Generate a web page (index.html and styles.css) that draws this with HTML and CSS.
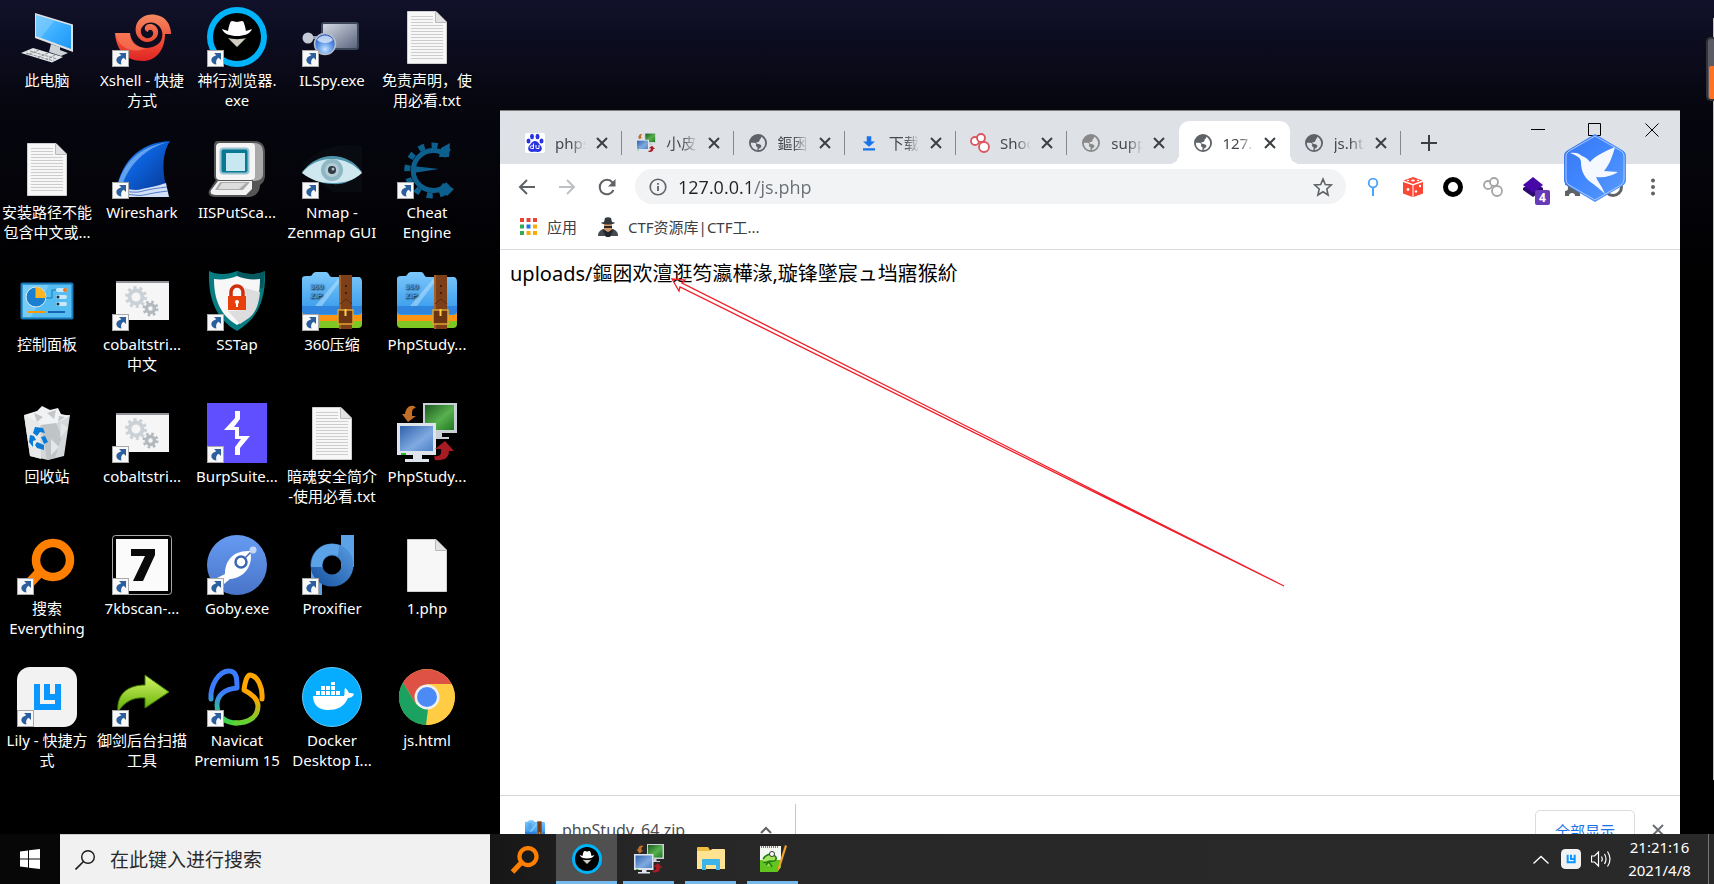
FILE: index.html
```html
<!DOCTYPE html>
<html lang="zh-CN">
<head>
<meta charset="utf-8">
<title>桌面</title>
<link rel="stylesheet" href="styles.css">
</head>
<body>
<svg class="defs" aria-hidden="true">
  <defs>
    <linearGradient id="g-screen" x1="0" y1="0" x2="1" y2="1"><stop offset="0" stop-color="#6cc6ff"/><stop offset=".55" stop-color="#38adff"/><stop offset="1" stop-color="#1d95f5"/></linearGradient>
    <linearGradient id="g-red" x1="0" y1="0" x2="0" y2="1"><stop offset="0" stop-color="#f58a62"/><stop offset=".6" stop-color="#ee4a34"/><stop offset="1" stop-color="#e02424"/></linearGradient>
    <linearGradient id="g-steel" x1="0" y1="0" x2="1" y2="1"><stop offset="0" stop-color="#d9dee8"/><stop offset="1" stop-color="#56617a"/></linearGradient>
    <radialGradient id="g-ball" cx=".5" cy=".75" r=".7"><stop offset="0" stop-color="#c5e4ff"/><stop offset=".5" stop-color="#5f97e8"/><stop offset="1" stop-color="#2b58b8"/></radialGradient>
    <linearGradient id="g-fin" x1="0" y1="0" x2="1" y2="1"><stop offset="0" stop-color="#4aa0f5"/><stop offset=".4" stop-color="#0c62dc"/><stop offset="1" stop-color="#07338c"/></linearGradient>
    <linearGradient id="g-folder" x1="0" y1="0" x2="0" y2="1"><stop offset="0" stop-color="#7cc8fb"/><stop offset="1" stop-color="#3297ea"/></linearGradient>
    <linearGradient id="g-green" x1="0" y1="0" x2="1" y2="1"><stop offset="0" stop-color="#1c5a20"/><stop offset=".55" stop-color="#58b04e"/><stop offset="1" stop-color="#1f7a22"/></linearGradient>
    <linearGradient id="g-blue" x1="0" y1="0" x2="1" y2="1"><stop offset="0" stop-color="#2f62ac"/><stop offset=".6" stop-color="#7fa9e0"/><stop offset="1" stop-color="#4f82c9"/></linearGradient>
    <linearGradient id="g-goby" x1="0" y1="0" x2="0" y2="1"><stop offset="0" stop-color="#669bf2"/><stop offset="1" stop-color="#4874c8"/></linearGradient>
    <linearGradient id="g-prox" x1="0" y1="1" x2="1" y2="0"><stop offset="0" stop-color="#1f5aa6"/><stop offset="1" stop-color="#4f93da"/></linearGradient>
    <linearGradient id="g-leaf" x1="0" y1="0" x2="0" y2="1"><stop offset="0" stop-color="#d5f56a"/><stop offset="1" stop-color="#5fae00"/></linearGradient>
    <linearGradient id="g-nav" x1="0" y1="0" x2="0" y2="1"><stop offset="0" stop-color="#3b7cff"/><stop offset=".4" stop-color="#3b7cff"/><stop offset=".8" stop-color="#2fc98a"/><stop offset="1" stop-color="#45d33c"/></linearGradient>
    <linearGradient id="g-nav2" x1="0" y1="0" x2="0" y2="1"><stop offset="0" stop-color="#ffa600"/><stop offset=".5" stop-color="#ffa600"/><stop offset="1" stop-color="#5fd335"/></linearGradient>
    <linearGradient id="g-bird" x1="0" y1="0" x2="1" y2="1"><stop offset="0" stop-color="#3a76ee"/><stop offset=".45" stop-color="#3f86ff"/><stop offset="1" stop-color="#5a9bf8"/></linearGradient>
  </defs>

  <symbol id="shortcut" viewBox="0 0 17 17"><rect x=".5" y=".5" width="16" height="16" fill="#f8f8f8" stroke="#a9a9a9"/><path d="M7 3h7v7l-2.300-2.200C9.500 9 8.600 11 9.400 14.500 5 14 4 11 4.500 9 5 7.300 7 6 9.300 5.300z" fill="#2c5f9e"/></symbol>

  <symbol id="pc" viewBox="0 0 60 60"><path d="M18 6l38 11.500V45L18 31z" fill="#dde1e4"/><path d="M19 8l35 10.500V42L19 29z" fill="url(#g-screen)"/><path d="M19 8l18 6L24 30.500 19 29z" fill="#8bd2ff" opacity=".5"/><path d="M34 37l9 3v3l8 3-7 3-12-4z" fill="#cdd2d6"/><path d="M16 41l30 9-11 5.500L4 46z" fill="#e4e7e9"/><path d="M9 46l28 8M13 44l27 8M22 43l-12 5M31 46l-11 5M38 48l-9 5" stroke="#8d9398" stroke-width="1" stroke-dasharray="3 1"/></symbol>

  <symbol id="xshell" viewBox="0 0 60 60"><path d="M3 26h15c0 6 3 12 10 14 9 3 20-1 22-9 3-11-9-20-18-13-5 4-4 11 2 13 4 1 8-2 7-6-1-3-5-3-5 0-5-1-4-8 2-8 8 0 11 10 5 15-9 8-22-1-19-13 2-8 11-13 20-11 9 1 15 9 15 19H53C53 44 43 54 31 54 12 54 4 41 3 26z" fill="url(#g-red)"/><path d="M3 26h15c1 8 7 15 16 15C20 48 6 40 3 26z" fill="#ff8c66" opacity=".5"/></symbol>

  <symbol id="spy" viewBox="0 0 60 60"><circle cx="30" cy="30" r="30" fill="#00b4fb"/><circle cx="30" cy="30" r="24" fill="#000"/><path d="M21 24c1-5 2-10 4-10 2 0 3 1 5 1s3-1 5-1c2 0 3 5 4 10l6-2c-2 5-8 7-15 7s-13-2-15-7z" fill="#fff"/><path d="M21 31c5 1.500 13 1.500 18 0l-9 9z" fill="#d3ccc0"/></symbol>

  <symbol id="ilspy" viewBox="0 0 60 60"><rect x="20" y="16" width="36" height="26" rx="2" fill="url(#g-steel)" stroke="#3c4658" stroke-width="2"/><path d="M6 29h18v3H6z" fill="#8e98aa"/><circle cx="6" cy="31" r="5.500" fill="#c4cad5"/><circle cx="23" cy="37" r="10.500" fill="url(#g-ball)" stroke="#b5bfce" stroke-width="1.500"/><path d="M15 33c3-6 13-6 16 0-4 4-12 4-16 0z" fill="#f1f7ff" opacity=".7"/></symbol>

  <symbol id="doc" viewBox="0 0 60 60"><path d="M10.500 4.500H39L49.500 15v41.500h-39z" fill="#f7f7f7" stroke="#cfcfcf"/><path d="M38.500 4.500v11h11" fill="#e2e2e2" stroke="#b9b9b9"/></symbol>
  <symbol id="txt" viewBox="0 0 60 60"><use href="#doc"/><path d="M14 9.500h22M14 12.500h22M14 15.500h22M14 18.500h32M14 21.500h32M14 24.500h32M14 27.500h32M14 30.500h32M14 33.500h32M14 36.500h32M14 39.500h32M14 42.500h32M14 45.500h32M14 48.500h32M14 51.500h32" stroke="#cdcdcd"/></symbol>

  <symbol id="shark" viewBox="0 0 60 60"><path d="M4 57C6 26 26 3 58 2c-9 14-8 34-1 56z" fill="url(#g-fin)"/><path d="M5 49C10 25 28 7 56 3 34 9 16 25 9 50z" fill="#9ac8f8" opacity=".6"/><path d="M4 52c10-5 16 1 26-2 9-2 15-3 24-6l3 14H4z" fill="#d3e0f8"/><path d="M5 53c9-2 17 2 26-1 8-2 15-3 24-4M6 57c10-4 18 1 26-1 9-2 15-3 24-4" stroke="#3463b8" fill="none" stroke-width=".8"/></symbol>

  <symbol id="oldpc" viewBox="0 0 60 60"><path d="M10 2h38c7 0 10 5 10 11v23c0 5-2 8-5 10 0 7-5 12-11 12H8c-6 0-8-4-5-8l6-9c-2-1-2-3-2-6V7c0-3 1-5 3-5z" fill="#555"/><path d="M43 4h6c5 1 7 4 7 10v21c0 5-4 7-10 7z" fill="#aaa"/><rect x="9" y="4" width="39" height="37" rx="4" fill="#f5f5f5"/><rect x="13.500" y="9.500" width="28" height="25" rx="3" fill="#087995" stroke="#99c4cf" stroke-width="2"/><rect x="19" y="14" width="19" height="18" fill="#c7e8f0"/><path d="M11 42h34v8l-6 6H9c-5 0-7-3-4-6z" fill="#f2f2f2"/><path d="M13 43h30l-7 8H8z" fill="#ababab"/><path d="M15 44h24l-7 6H11z" fill="#ddd"/></symbol>

  <symbol id="eye" viewBox="0 0 60 60"><path d="M0 26C18 6 42 4 60 7v46H30z" fill="#080b0f"/><path d="M0 33C9 22 19 17 30 17c12 0 22 5 30 16-9 9-19 13-30 12-12 0-21-5-30-12z" fill="#4f94ad"/><path d="M0 34C8 24 19 20 30 20c12 0 22 5 30 14-9 8-18 10-30 10S9 41 0 34z" fill="#cfe7ef"/><circle cx="30" cy="31" r="11" fill="#8fb7c4"/><circle cx="30" cy="31" r="7" fill="#b4cdd6"/><circle cx="30" cy="31" r="4" fill="#2e3a42"/><circle cx="31" cy="30" r="1.500" fill="#a9bfc9"/></symbol>

  <symbol id="cheat" viewBox="0 0 60 60"><path d="M50 17A20 20 0 1 0 51 45" fill="none" stroke="#0d5f8d" stroke-width="5"/><path d="M52 13A25 25 0 1 0 54 48" fill="none" stroke="#0d5f8d" stroke-width="6" stroke-dasharray="6 7"/><path d="M44 9l9-5-1 14-10 0zM46 44l11 6-7 7-8-7zM16 27l26 3-26 4z" fill="#0d5f8d"/></symbol>

  <symbol id="control" viewBox="0 0 60 60"><rect x="4.500" y="12.500" width="51" height="35" rx="1" fill="#55bdf2" stroke="#1779ba" stroke-width="2"/><path d="M6 14h26L14 46H6z" fill="#a0ddfb" opacity=".45"/><circle cx="19" cy="26" r="10" fill="#1a7fce" stroke="#d7effb"/><path d="M18.500 27V16a10 10 0 0 1 10 11z" fill="#ffb522"/><path d="M29 27h6v-8h4" fill="none" stroke="#1779ba"/><rect x="39" y="17" width="11" height="4" rx="2" fill="#c9e9fa"/><rect x="39" y="24" width="11" height="4" rx="2" fill="#c9e9fa"/><rect x="39" y="31" width="11" height="4" rx="2" fill="#c9e9fa"/><circle cx="48" cy="19" r="2" fill="#f4761c"/><circle cx="41" cy="26" r="1.500" fill="#17324a"/><circle cx="41" cy="33" r="1.500" fill="#17324a"/><path d="M11 41h18" stroke="#f90" stroke-width="2"/><path d="M31 41h17" stroke="#1567b1" stroke-width="2"/></symbol>

  <symbol id="gears" viewBox="0 0 60 60"><path d="M4 10h53v39H4z" fill="#f6f6f6"/><path d="M4 10h53v2H4z" fill="#909498"/><circle cx="24" cy="26" r="6.500" fill="none" stroke="#cbd2d7" stroke-width="4"/><circle cx="24" cy="26" r="9.500" fill="none" stroke="#cbd2d7" stroke-width="3" stroke-dasharray="3 3"/><circle cx="38.500" cy="37.500" r="4" fill="none" stroke="#b3babf" stroke-width="3.500"/><circle cx="38.500" cy="37.500" r="6.500" fill="none" stroke="#b3babf" stroke-width="3" stroke-dasharray="2.500 2.600"/></symbol>

  <symbol id="shield" viewBox="0 0 60 60"><path d="M2 0l5 2c8 2 16 1 23-2 7 3 15 4 23 2l5-2c1 28-7 48-28 60C9 48 1 28 2 0z" fill="#067b80"/><path d="M30 0c7 3 15 4 23 2l5-2-2 18-26-12z" fill="#06595f"/><path d="M7 8c8 1 16 0 23-3 7 3 15 4 23 3 0 20-6 36-23 46C13 44 7 28 7 8z" fill="#f7f7f7"/><path d="M39 39l-1-22 15 4c-1 12-4 20-11 26L33 53 21 40z" fill="#ddd"/><rect x="21" y="25" width="18" height="14" fill="#e8400c"/><path d="M24 25v-4a6 6 0 0 1 12 0v4" fill="none" stroke="#cf2f0c" stroke-width="3.500"/><circle cx="30" cy="31" r="2" fill="#fff"/><path d="M29 31h2v5h-2z" fill="#fff"/></symbol>

  <symbol id="zip" viewBox="0 0 60 60"><path d="M0 44h60v9a4 4 0 0 1-4 4H4a4 4 0 0 1-4-4z" fill="#7fc725"/><path d="M0 38h60v12H0z" fill="#fd9412"/><path d="M0 8c0-2 1-3 4-3h4c3 0 2-4 6-4h10c3 0 3 5 6 5h26c3 0 4 2 4 5v30c0 2-2 3-4 3H4c-2 0-4-1-4-3z" fill="url(#g-folder)"/><path d="M0 35h60v5c0 2-2 3-4 3H4c-2 0-4-1-4-3z" fill="#2f85dd"/><path d="M13 35L36 8h4L20 35z" fill="#b7e0fd" opacity=".55"/><text class="zip-mark" x="8" y="18">360</text><text class="zip-mark" x="8" y="27">ZIP</text><path d="M37 4h13v54H37z" fill="#7d3f17"/><path d="M37 4h2v54h-2z" fill="#a4602b"/><circle cx="44" cy="15" r="1" fill="#2d1404"/><circle cx="44" cy="22" r="1" fill="#2d1404"/><path d="M38 33l6-5 6 5" fill="none" stroke="#5b2a0c"/><rect x="36" y="39" width="15" height="14" fill="#6b3412" stroke="#e0a432" stroke-width="1.500"/><path d="M43.500 38v7" stroke="#ffce4a" stroke-width="2"/></symbol>

  <symbol id="bin" viewBox="0 0 60 60"><path d="M7 12l46 0-6 41-16 4-18-4z" fill="#d5d8da"/><path d="M7 12l13-4 5-5 8 4 8-2 3 6 9 2-15 8-15 1z" fill="#f1f2f3"/><path d="M17 10l9 4-6 5zM30 10l9-3-2 9zM42 13l6 1-7 5z" fill="#c3c7ca"/><path d="M7 12l16 8 1 36-11-3z" fill="#e7e9ea"/><path d="M24 22l15-2 6 13-7 22-8 2z" fill="#bfc4c7"/><path d="M44 20l7 5-8 10zM34 36l8 8-8 8z" fill="#e4e7e8"/><path d="M18 24l8 1 2 5-5-1-3 4-4-3zM13 32l4 1 2 4-3 1 0 6-4-5zM20 39l7 3v5l-7-2-2-3zM24 34l4-1 3 6-4 2z" fill="#0a7bd6"/></symbol>

  <symbol id="burp" viewBox="0 0 60 60"><path d="M0 0h60v60H0z" fill="#604fff"/><path d="M28 8v7L17 27h11v9h6l-6 8v8h5v-7l10-12H32v-9h-5l6-8V8z" fill="#fff"/></symbol>

  <symbol id="study" viewBox="0 0 60 60"><path d="M26 0h34v30H45v4h7v2H33v-4h6v-3H26z" fill="#c9d0d8"/><path d="M28 2h29v25H28z" fill="url(#g-green)"/><path d="M17 3C12 2 9 5 8 11H5l6 8 8-6h-4c0-5 0-8 4-8z" fill="#c26f27"/><path d="M0 20h39v32H25v4h7v3H8v-3h8v-4H0z" fill="#dfe4ec"/><path d="M3 23h33v25H3z" fill="url(#g-blue)"/><path d="M4 51h5" stroke="#27b827" stroke-width="2"/><path d="M38 57c9 1 14-2 14-9h5l-9-10-10 8h6c1 5-1 8-7 7z" fill="#a61b24"/></symbol>

  <symbol id="search-o" viewBox="0 0 60 60"><path d="M22 38L5 56" stroke="#ff8000" stroke-width="10"/><circle cx="36" cy="25" r="17" fill="none" stroke="#ff8000" stroke-width="8.500"/></symbol>

  <symbol id="seven" viewBox="0 0 60 60"><path d="M0 0h60v60H0z" fill="#000"/><rect x=".5" y=".5" width="59" height="59" rx="3" fill="none" stroke="#aaa"/><rect x="4" y="4" width="52" height="52" fill="#fbfbfb"/><path d="M19 14h24v6L31 46h-10l12-25H19z" fill="#0a0a0a"/></symbol>

  <symbol id="goby" viewBox="0 0 60 60"><circle cx="30" cy="30" r="30" fill="url(#g-goby)"/><path d="M10 43l8-4c0-12 7-24 25-23 4 13-5 27-20 28l-6 5z" fill="#fff"/><circle cx="34" cy="27" r="5.500" fill="#fff" stroke="#3a66b4" stroke-width="2.500"/><path d="M38 23l7-7" stroke="#3a66b4" stroke-width="1.500"/><circle cx="46" cy="15" r="3.500" fill="#c3d6f7"/></symbol>

  <symbol id="prox" viewBox="0 0 60 60"><path d="M39 0h13v32H39z" fill="#5ba2e6"/><path d="M9 28h11v32H9z" fill="#5ba2e6"/><circle cx="30" cy="30" r="15.500" fill="none" stroke="url(#g-prox)" stroke-width="12"/><path d="M9 32C9 14 24 6 37 10l-1 11c-8-4-16 1-16 11z" fill="#5ba2e6"/></symbol>

  <symbol id="lily" viewBox="0 0 60 60"><rect width="60" height="60" rx="13" fill="#f2f2f2"/><path d="M17 17h6v20h15v-4H27V17h6v10h5V17h6v26H17z" fill="#0a97ff"/></symbol>

  <symbol id="share" viewBox="0 0 60 60"><path d="M6 45C4 27 16 18 33 18V8l24 17-24 16V31c-12-1-21 4-27 14z" fill="url(#g-leaf)" stroke="#3d7a00"/></symbol>

  <symbol id="navicat" viewBox="0 0 60 60"><path d="M4 32C3 18 12 4 22 4c8 0 8 8 8 17-12 1-20 7-20 17 0 12 9 18 20 18" fill="none" stroke="url(#g-nav)" stroke-width="5" stroke-linecap="round" stroke-linejoin="round"/><path d="M28 56c14 0 23-6 23-17 0-7-6-12-14-16 1-8 3-15 6-15 8 1 13 13 12 24" fill="none" stroke="url(#g-nav2)" stroke-width="5" stroke-linecap="round" stroke-linejoin="round"/></symbol>

  <symbol id="docker" viewBox="0 0 60 60"><circle cx="30" cy="30" r="29.500" fill="#06adff" stroke="#63c8fa"/><path d="M11 29h31c1-2 0-5 1-8 2 1 3 3 4 5 2 0 4 0 5 1-1 3-4 4-6 4-4 9-11 12-20 12-11 0-15-7-15-14z" fill="#fff"/><path d="M14 24h4v4h-4zM19 24h4v4h-4zM24 24h4v4h-4zM29 24h4v4h-4zM34 24h4v4h-4zM19 19h4v4h-4zM24 19h4v4h-4zM29 19h4v4h-4zM29 15h4v3h-4z" fill="#fff"/></symbol>

  <symbol id="chrome" viewBox="0 0 60 60"><circle cx="30" cy="30" r="28" fill="#fc4"/><path d="M6 15.500A28 28 0 0 1 54.500 17H30L19 37z" fill="#de5246"/><path d="M6 15.500L19 37l12 5-2 16A28 28 0 0 1 6 15.500z" fill="#1ba261"/><path d="M30 58l12-21 1-20H54.500A28 28 0 0 1 30 58z" fill="#fc4"/><circle cx="30" cy="30" r="12.500" fill="#f1f1f1"/><circle cx="30" cy="30" r="10" fill="#4c8bf5"/></symbol>

  <symbol id="paw" viewBox="0 0 20 20"><rect width="20" height="20" rx="2" fill="#fff"/><ellipse cx="7" cy="3.500" rx="2" ry="2.700" fill="#2832e1"/><ellipse cx="12.500" cy="3.500" rx="2" ry="2.700" fill="#2832e1"/><ellipse cx="3.500" cy="8" rx="2" ry="2.600" fill="#2832e1"/><ellipse cx="16.500" cy="8" rx="2" ry="2.600" fill="#2832e1"/><path d="M10 8c3 0 4 3 6 5 2 3 0 6-3 6-2 0-4-.5-6 0-3 0-5-3-3-6 2-2 3-5 6-5z" fill="#2832e1"/><path d="M8.500 10.500v5H6.500a1.200 1.200 0 0 1 0-2.600h2M11 12v2.500q0 1 1 1h2V12" fill="none" stroke="#fff"/></symbol>
  <symbol id="globe" viewBox="0 0 24 24"><path fill="currentColor" d="M12 0a12 12 0 1 0 0 24 12 12 0 0 0 0-24zM2.500 11.500c3 .5 6-.5 7 1.500.5 2-1.500 3 1 4 1.500.5 1 2.500.5 4.500C6 21 2.200 16.500 2.500 11.500zM13 21.500c-.5-3 3.500-2.500 3.500-5.500 0-2.500-5-2-7-4 0-2 4-.5 4.500-3.500S17 6 16 3.500c3.500 1.500 5.500 5 5.500 8.500 0 5-3.500 9-8.500 9.500z"/></symbol>
  <symbol id="down" viewBox="0 0 24 24"><path d="M9 3h6v7h5l-8 7-8-7h5zM4 19h16v3H4z" fill="#1a73e8"/></symbol>
  <symbol id="rings" viewBox="0 0 20 20"><g fill="#fff" stroke="currentColor" stroke-width="1.800"><circle cx="5" cy="8" r="4"/><circle cx="11" cy="5" r="4"/><circle cx="14" cy="14" r="5"/></g></symbol>
  <symbol id="x" viewBox="0 0 12 12"><path d="M1 1l10 10M11 1L1 11" stroke="currentColor" stroke-width="2"/></symbol>
  <symbol id="bird" viewBox="0 0 64 70"><path d="M32 1l27 16q4 2 4 6v24q0 4-4 6L32 69 5 53q-4-2-4-6V23q0-4 4-6z" fill="url(#g-bird)"/><path d="M32 3l26 15q3 2 3 5v23q0 4-3 6L32 67 6 52q-3-2-3-6V23q0-3 3-5z" fill="none" stroke="#a9c9ff"/><path d="M7 20c5-1 9 0 12 3 3 1 6 3 8 6 6-7 16-11 25-15-3 11-6 18-11 24l14 1c-6 4-14 6-22 5 2 5 6 9 9 17-7-7-12-10-17-14-6-6-7-13-7-18 0-5-6-7-11-9z" fill="#f5f8ff"/></symbol>
</svg>

<main class="desktop">
  <nav class="icons" aria-label="桌面图标">
    <button class="icon"><svg class="art"><use href="#pc"/></svg><span>此电脑</span></button>
    <button class="icon"><svg class="art"><use href="#txt"/></svg><span>安装路径不能<br>包含中文或...</span></button>
    <button class="icon"><svg class="art"><use href="#control"/></svg><span>控制面板</span></button>
    <button class="icon"><svg class="art"><use href="#bin"/></svg><span>回收站</span></button>
    <button class="icon"><svg class="art"><use href="#search-o"/><use href="#shortcut" y="43" width="17" height="17"/></svg><span>搜索<br>Everything</span></button>
    <button class="icon"><svg class="art"><use href="#lily"/><use href="#shortcut" y="43" width="17" height="17"/></svg><span>Lily - 快捷方<br>式</span></button>

    <button class="icon"><svg class="art"><use href="#xshell"/><use href="#shortcut" y="43" width="17" height="17"/></svg><span>Xshell - 快捷<br>方式</span></button>
    <button class="icon"><svg class="art"><use href="#shark"/><use href="#shortcut" y="43" width="17" height="17"/></svg><span>Wireshark</span></button>
    <button class="icon"><svg class="art"><use href="#gears"/><use href="#shortcut" y="43" width="17" height="17"/></svg><span>cobaltstri...<br>中文</span></button>
    <button class="icon"><svg class="art"><use href="#gears"/><use href="#shortcut" y="43" width="17" height="17"/></svg><span>cobaltstri...</span></button>
    <button class="icon"><svg class="art"><use href="#seven"/><use href="#shortcut" y="43" width="17" height="17"/></svg><span>7kbscan-...</span></button>
    <button class="icon"><svg class="art"><use href="#share"/><use href="#shortcut" y="43" width="17" height="17"/></svg><span>御剑后台扫描<br>工具</span></button>

    <button class="icon"><svg class="art"><use href="#spy"/><use href="#shortcut" y="43" width="17" height="17"/></svg><span>神行浏览器.<br>exe</span></button>
    <button class="icon"><svg class="art"><use href="#oldpc"/></svg><span>IISPutSca...</span></button>
    <button class="icon"><svg class="art"><use href="#shield"/><use href="#shortcut" y="43" width="17" height="17"/></svg><span>SSTap</span></button>
    <button class="icon"><svg class="art"><use href="#burp"/><use href="#shortcut" y="43" width="17" height="17"/></svg><span>BurpSuite...</span></button>
    <button class="icon"><svg class="art"><use href="#goby"/><use href="#shortcut" y="43" width="17" height="17"/></svg><span>Goby.exe</span></button>
    <button class="icon"><svg class="art"><use href="#navicat"/><use href="#shortcut" y="43" width="17" height="17"/></svg><span>Navicat<br>Premium 15</span></button>

    <button class="icon"><svg class="art"><use href="#ilspy"/><use href="#shortcut" y="43" width="17" height="17"/></svg><span>ILSpy.exe</span></button>
    <button class="icon"><svg class="art"><use href="#eye"/><use href="#shortcut" y="43" width="17" height="17"/></svg><span>Nmap -<br>Zenmap GUI</span></button>
    <button class="icon"><svg class="art"><use href="#zip"/><use href="#shortcut" y="43" width="17" height="17"/></svg><span>360压缩</span></button>
    <button class="icon"><svg class="art"><use href="#txt"/></svg><span>暗魂安全简介<br>-使用必看.txt</span></button>
    <button class="icon"><svg class="art"><use href="#prox"/><use href="#shortcut" y="43" width="17" height="17"/></svg><span>Proxifier</span></button>
    <button class="icon"><svg class="art"><use href="#docker"/></svg><span>Docker<br>Desktop I...</span></button>

    <button class="icon"><svg class="art"><use href="#txt"/></svg><span>免责声明，使<br>用必看.txt</span></button>
    <button class="icon"><svg class="art"><use href="#cheat"/><use href="#shortcut" y="43" width="17" height="17"/></svg><span>Cheat<br>Engine</span></button>
    <button class="icon"><svg class="art"><use href="#zip"/></svg><span>PhpStudy...</span></button>
    <button class="icon"><svg class="art"><use href="#study"/></svg><span>PhpStudy...</span></button>
    <button class="icon"><svg class="art"><use href="#doc"/></svg><span>1.php</span></button>
    <button class="icon"><svg class="art"><use href="#chrome"/></svg><span>js.html</span></button>
  </nav>

  <section class="window" aria-label="浏览器">
    <header class="titlebar">
      <div class="tabs">
        <div class="tab"><svg class="fav"><use href="#paw"/></svg><span class="tab-title">phps</span><button class="tab-close" aria-label="关闭"><svg><use href="#x"/></svg></button></div>
        <div class="tab"><svg class="fav"><use href="#study"/></svg><span class="tab-title">小皮面</span><button class="tab-close" aria-label="关闭"><svg><use href="#x"/></svg></button></div>
        <div class="tab"><svg class="fav small"><use href="#globe"/></svg><span class="tab-title">鏂囦欢</span><button class="tab-close" aria-label="关闭"><svg><use href="#x"/></svg></button></div>
        <div class="tab"><svg class="fav small"><use href="#down"/></svg><span class="tab-title">下载</span><button class="tab-close" aria-label="关闭"><svg><use href="#x"/></svg></button></div>
        <div class="tab"><svg class="fav red"><use href="#rings"/></svg><span class="tab-title">Shod</span><button class="tab-close" aria-label="关闭"><svg><use href="#x"/></svg></button></div>
        <div class="tab"><svg class="fav small light"><use href="#globe"/></svg><span class="tab-title">supp</span><button class="tab-close" aria-label="关闭"><svg><use href="#x"/></svg></button></div>
        <div class="tab active"><svg class="fav small"><use href="#globe"/></svg><span class="tab-title">127.0</span><button class="tab-close" aria-label="关闭"><svg><use href="#x"/></svg></button></div>
        <div class="tab"><svg class="fav small"><use href="#globe"/></svg><span class="tab-title">js.htm</span><button class="tab-close" aria-label="关闭"><svg><use href="#x"/></svg></button></div>
      </div>
      <button class="new-tab" aria-label="新标签页"><svg viewBox="0 0 16 16"><path d="M8 0v16M0 8h16" stroke="#3c4043" stroke-width="2"/></svg></button>
      <div class="controls">
        <button aria-label="最小化"><svg viewBox="0 0 14 14"><path d="M0 6.500h14" stroke="#000"/></svg></button>
        <button aria-label="最大化"><svg viewBox="0 0 14 14"><path d="M.5.5h12v12H.5z" fill="none" stroke="#000"/></svg></button>
        <button aria-label="关闭窗口"><svg viewBox="0 0 14 14"><path d="M.5.5l13 13M13.500.5l-13 13" stroke="#000"/></svg></button>
      </div>
    </header>

    <div class="toolbar">
      <button class="tool" aria-label="后退"><svg viewBox="0 0 18 18"><path d="M17 9H2M9 2L2 9l7 7" fill="none" stroke="#5f6368" stroke-width="2"/></svg></button>
      <button class="tool" aria-label="前进"><svg viewBox="0 0 18 18"><path d="M1 9h15M9 2l7 7-7 7" fill="none" stroke="#bdc1c6" stroke-width="2"/></svg></button>
      <button class="tool" aria-label="重新加载"><svg viewBox="0 0 18 18"><path d="M15.500 12A7.200 7.200 0 1 1 14.500 4.500" fill="none" stroke="#5f6368" stroke-width="2"/><path d="M17.500 1v7.500H10z" fill="#5f6368"/></svg></button>
      <label class="omnibox">
        <svg class="info" viewBox="0 0 18 18"><circle cx="9" cy="9" r="7.800" fill="none" stroke="#5f6368" stroke-width="1.600"/><path d="M9 8v5M9 5v1.800" stroke="#5f6368" stroke-width="1.800"/></svg>
        <input class="url" type="text" value="127.0.0.1/js.php" aria-label="地址">
        <svg class="star" viewBox="0 0 20 20"><path d="M10 2l2.300 5.500 6 .5-4.500 4 1.300 6-5.100-3.200L4.900 18l1.300-6L1.700 8l6-.5z" fill="none" stroke="#5f6368" stroke-width="1.600"/></svg>
      </label>
      <div class="extensions">
        <button class="ext" aria-label="定位"><svg viewBox="0 0 20 20"><circle cx="10" cy="6" r="4.300" fill="none" stroke="#4ba3fb" stroke-width="1.800"/><path d="M10 10v9" stroke="#4ba3fb" stroke-width="2"/></svg></button>
        <button class="ext" aria-label="骰子"><svg viewBox="0 0 20 20"><path d="M10 0l9.500 3.500L10 7 .5 3.500zM0 5l9.500 3.200V20L0 16.500zM20 5l-9.500 3.200V20l9.500-3.500z" fill="#fb4734"/><g fill="#fff"><ellipse cx="10" cy="3.500" rx="2" ry=".9"/><circle cx="5" cy="12.500" r="1.400"/><circle cx="13" cy="14.500" r="1.200"/><circle cx="17" cy="9" r="1.200"/><ellipse cx="5" cy="3.500" rx="1.300" ry=".7"/><ellipse cx="15" cy="3.500" rx="1.300" ry=".7"/></g></svg></button>
        <button class="ext" aria-label="圆环"><svg viewBox="0 0 20 20"><circle cx="10" cy="10" r="7.500" fill="#fff" stroke="#000" stroke-width="5"/></svg></button>
        <button class="ext grey" aria-label="Shodan"><svg><use href="#rings"/></svg></button>
        <button class="ext" aria-label="图层"><svg viewBox="0 0 20 20"><path d="M0 11l10-6 10 6v2l-10 7-10-7z" fill="#2b0a70"/><path d="M10 0l10 8-10 8L0 8z" fill="#4609a8"/></svg><span class="badge">4</span></button>
        <button class="ext" aria-label="扩展程序"><svg viewBox="0 0 20 20"><path d="M3 4h4a3 3 0 0 1 6 0h4v5a3 3 0 0 1 0 6v4h-5a3 3 0 0 0-6 0H2v-5a3 3 0 0 0 0-6z" fill="#5f6368"/></svg></button>
        <button class="ext" aria-label="用户"><svg viewBox="0 0 20 20"><circle cx="10" cy="10" r="8.500" fill="none" stroke="#5f6368" stroke-width="3"/></svg></button>
        <button class="ext" aria-label="菜单"><svg viewBox="0 0 20 20"><g fill="#5f6368"><circle cx="10" cy="3.500" r="2"/><circle cx="10" cy="10" r="2"/><circle cx="10" cy="16.500" r="2"/></g></svg></button>
      </div>
      <svg class="bird"><use href="#bird"/></svg>
    </div>

    <nav class="bookmarks">
      <a href="#apps"><svg viewBox="0 0 17 17"><path d="M0 0h4v4H0zM6.500 0h4v4h-4zM13 0h4v4h-4z" fill="#ea4335"/><path d="M0 6.500h4v4H0z" fill="#34a853"/><path d="M6.500 6.500h4v4h-4z" fill="#1a73e8"/><path d="M13 6.500h4v4h-4zM6.500 13h4v4h-4zM13 13h4v4h-4z" fill="#fbaa05"/><path d="M0 13h4v4H0z" fill="#34a853"/></svg>应用</a>
      <a href="#ctf"><svg class="detective" viewBox="0 0 20 20"><path d="M0 19c0-4 2-6 6-7h8c4 1 6 3 6 7z" fill="#444a50"/><path d="M6 7h8v5l-4 4-4-4z" fill="#d59a66"/><path d="M6 9h8v2H6zM4 12l6 3 6-3-4 8H8z" fill="#23272b"/><path d="M6 5l1-4c2-1 4-1 6 0l1 4c2 0 3 1 3 1-4 2-10 2-14 0 0 0 1-1 3-1z" fill="#33383c"/></svg>CTF资源库|CTF工...</a>
    </nav>

    <article class="page">uploads/鏂囦欢澶逛笉瀛樺湪,璇锋墜宸ュ垱寤猴紒</article>

    <footer class="downloads">
      <button class="file"><svg class="fav"><use href="#zip"/></svg><span>phpStudy_64.zip</span><svg class="chev" viewBox="0 0 12 8"><path d="M1 7l5-5 5 5" fill="none" stroke="#5f6368" stroke-width="2"/></svg></button>
      <button class="show-all">全部显示</button>
      <button class="bar-close" aria-label="关闭下载栏"><svg><use href="#x"/></svg></button>
    </footer>
  </section>

  <svg class="arrow" viewBox="0 0 614 310" aria-hidden="true"><path d="M1 1l13 1-3 3 602 303L9 9l-1 4z" fill="none" stroke="#f0202a" stroke-width="1.300"/></svg>
  <div class="edge"></div>
  <div class="meter"><span></span></div>
</main>

<footer class="taskbar">
  <button class="start" aria-label="开始"><svg viewBox="0 0 20 20"><path d="M0 2.500l8-1V9.500H0zM9 1.300L20 0v9.500H9zM0 10.500h8v8l-8-1zM9 10.500h11V20L9 18.700z" fill="#fff"/></svg></button>
  <label class="search">
    <svg viewBox="0 0 20 20"><circle cx="13" cy="7" r="6.300" fill="none" stroke="#1b1b1b" stroke-width="1.400"/><path d="M8.500 11.500L.5 19.500" stroke="#1b1b1b" stroke-width="1.600"/></svg>
    <input type="text" placeholder="在此键入进行搜索" aria-label="搜索">
  </label>
  <div class="apps">
    <button class="app" aria-label="Everything"><svg><use href="#search-o"/></svg></button>
    <button class="app running current" aria-label="神行浏览器"><svg><use href="#spy"/></svg></button>
    <button class="app running" aria-label="phpStudy"><svg><use href="#study"/></svg></button>
    <button class="app running" aria-label="文件资源管理器"><svg viewBox="0 0 30 30"><path d="M1 4q0-1 1-1h10l2 3h14q1 0 1 1v4H1z" fill="#efbd3f"/><path d="M1 7h13l2-2h12q1 0 1 1v19H1z" fill="#ffe392"/><path d="M6 26V16q0-1 1-1h16q1 0 1 1v10h-4v-5H10v5z" fill="#3cb4ea"/></svg></button>
    <button class="app running" aria-label="Notepad++"><svg viewBox="0 0 30 30"><path d="M2 2h21v21l-4 5H2z" fill="#f4f7f0"/><path d="M2 16h21v7l-4 5H2z" fill="#62c51f"/><path d="M3 3h18" stroke="#777" stroke-width="2" stroke-dasharray="1 1"/><path d="M5 15c3-5 8-6 12-3 3 3 0 6-4 5-4 0-5 3-8 1M8 21l3-3 3 5" fill="#a3e45c" stroke="#247b12" stroke-width="1.500"/><circle cx="14" cy="10" r="2.500" fill="#fff" stroke="#333"/><path d="M27 1l2 1-7 22-2 3V23z" fill="#f0a32a"/></svg></button>
  </div>
  <div class="tray">
    <button aria-label="显示隐藏的图标"><svg class="up" viewBox="0 0 16 9"><path d="M.5 8.500l7.500-7 7.500 7" fill="none" stroke="#fff" stroke-width="1.300"/></svg></button>
    <button aria-label="Lily"><svg class="mini"><use href="#lily"/></svg></button>
    <button aria-label="音量"><svg class="mini" viewBox="0 0 20 20"><path d="M.5 7h3l4-4v14l-4-4h-3z M10.500 7.500q1.500 2.500 0 5M13.500 5q3 5 0 10M16.500 2.500q5 7.500 0 15" fill="none" stroke="#fff" stroke-width="1.200"/></svg></button>
    <time class="clock" datetime="2021-04-08T21:21:16">21:21:16<br>2021/4/8</time>
    <button class="peek" aria-label="显示桌面"></button>
  </div>
</footer>
</body>
</html>
```
FILE: styles.css
```css
* { box-sizing: border-box; }

body {
  margin: 0;
  height: 100vh;
  display: flex;
  flex-direction: column;
  overflow: hidden;
  background: #000;
  font-family: "Noto Sans", "Noto Sans CJK SC", sans-serif;
  font-size: 15px;
}

button {
  margin: 0;
  padding: 0;
  border: 0;
  background: none;
  color: inherit;
  font: inherit;
}

input {
  min-width: 0;
  padding: 0;
  border: 0;
  outline: 0;
  background: none;
  font: inherit;
}

svg { display: block; flex: none; }

.defs { position: absolute; width: 0; height: 0; }

/* Desktop */

.desktop {
  position: relative;
  flex: 1;
  min-height: 0;
  overflow: hidden;
  background: linear-gradient(#11112a, #06060f 110px, #000 300px);
}

.icons {
  display: grid;
  grid-template-rows: repeat(6, 132px);
  grid-auto-flow: column;
  grid-auto-columns: 95px;
  justify-content: start;
  padding-top: 7px;
}

.icon {
  display: flex;
  flex-direction: column;
  align-items: center;
  gap: 3px;
  padding-right: 1px;
  color: #fff;
  line-height: 20px;
  white-space: nowrap;
  text-shadow: 1px 1px 2px #000;
}

.art { width: 60px; height: 60px; }

.zip-mark {
  font: bold 8px "Liberation Sans", sans-serif;
  fill: #4b9be0;
}

/* Browser window */

.window {
  position: absolute;
  top: 110px;
  right: 34px;
  bottom: -30px;
  left: 500px;
  display: flex;
  flex-direction: column;
  border-top: 1px solid #7d7d80;
  background: #fff;
}

.titlebar {
  display: flex;
  align-items: flex-start;
  height: 53px;
  padding-left: 11px;
  background: #dee1e6;
}

.tabs {
  display: flex;
  flex: 0 1 890px;
  min-width: 0;
  height: 53px;
  padding-top: 10px;
}

.tab {
  position: relative;
  display: flex;
  flex: 1 1 0;
  align-items: center;
  min-width: 0;
  padding-left: 14px;
  color: #5f6368;
}

.tab::after {
  content: "";
  position: absolute;
  right: 0;
  top: 10px;
  width: 1px;
  height: 24px;
  background: #85888d;
}

.tab.active { border-radius: 10px 10px 0 0; background: #fff; }

.tab.active::before,
.tab.active::after {
  top: auto;
  bottom: 0;
  width: 10px;
  height: 10px;
  background: radial-gradient(circle at 0 0, transparent 10px, #fff 10px);
}

.tab.active::before {
  content: "";
  position: absolute;
  left: -10px;
}

.tab.active::after {
  right: -10px;
  background: radial-gradient(circle at 100% 0, transparent 10px, #fff 10px);
}

.tab:has(+ .active)::after { display: none; }

.fav { width: 20px; height: 20px; }
.fav.small { width: 18px; height: 18px; margin: 0 1px; }
.fav.light { color: #888; }
.fav.red { color: #dc5560; }

.tab-title {
  flex: 1 1 0;
  min-width: 0;
  margin-left: 10px;
  overflow: hidden;
  color: #45484c;
  white-space: nowrap;
  mask-image: linear-gradient(to right, #000 50%, transparent);
}

.tab-close { margin: 0 14px 0 10px; color: #3c4043; }
.tab-close svg { width: 12px; height: 12px; }

.new-tab { margin: 24px 0 0 20px; }
.new-tab svg { width: 16px; height: 16px; }

.controls {
  display: flex;
  margin-left: auto;
}

.controls button {
  display: grid;
  place-items: center;
  width: 57px;
  height: 38px;
}

.controls svg { width: 14px; height: 14px; }

.toolbar {
  position: relative;
  display: flex;
  align-items: center;
  height: 45px;
  padding: 0 7px;
}

.tool {
  display: grid;
  place-items: center;
  width: 40px;
  height: 40px;
}

.tool svg { width: 18px; height: 18px; }

.omnibox {
  display: flex;
  flex: 1;
  align-items: center;
  height: 35px;
  margin-left: 8px;
  padding: 0 13px 0 14px;
  border-radius: 18px;
  background: #f1f3f4;
}

.info { width: 18px; height: 18px; }
.star { width: 20px; height: 20px; }

.url {
  flex: 1;
  margin-left: 11px;
  background: linear-gradient(to right, #202124 75px, #6a6e73 75px) text;
  color: transparent;
  font-family: "Open Sans", sans-serif;
  font-size: 18px;
}

.extensions {
  display: flex;
  margin-left: 7px;
}

.ext {
  position: relative;
  display: grid;
  place-items: center;
  width: 40px;
  height: 40px;
}

.ext svg { width: 20px; height: 20px; }
.ext.grey { color: #a5a5a5; }

.badge {
  position: absolute;
  right: 3px;
  bottom: 2px;
  width: 15px;
  height: 15px;
  border-radius: 2px;
  background: #673ab7;
  color: #fff;
  font-size: 12px;
  font-weight: 700;
  line-height: 15px;
}

.bird {
  position: absolute;
  right: 53px;
  top: -31px;
  width: 64px;
  height: 70px;
}

.bookmarks {
  display: flex;
  gap: 21px;
  align-items: center;
  height: 41px;
  padding: 0 0 5px 20px;
  border-bottom: 1px solid #d9dbde;
}

.bookmarks a {
  display: flex;
  gap: 10px;
  align-items: center;
  color: #3c4043;
  text-decoration: none;
}

.bookmarks svg { width: 17px; height: 17px; }
.bookmarks .detective { width: 20px; height: 20px; }

.page {
  flex: 1;
  padding: 10px;
  color: #000;
  font-size: 20px;
  line-height: 28px;
}

.downloads {
  display: flex;
  align-items: center;
  height: 69px;
  padding-right: 16px;
  border-top: 1px solid #d4d5d7;
}

.file {
  display: flex;
  align-items: center;
  align-self: stretch;
  width: 296px;
  margin: 8px 0;
  padding: 0 23px 0 25px;
  border-right: 1px solid #c6c8ca;
  color: #4a4e54;
  font-size: 16px;
}

.file span { margin-left: 17px; }
.chev { width: 12px; height: 8px; margin-left: auto; }

.show-all {
  width: 100px;
  height: 40px;
  margin-left: auto;
  border: 1px solid #dadce0;
  border-radius: 5px;
  color: #1a73e8;
}

.bar-close { margin-left: 17px; color: #6b6f74; }
.bar-close svg { width: 12px; height: 12px; }

/* Overlays */

.arrow {
  position: absolute;
  left: 671px;
  top: 278px;
  width: 614px;
  height: 310px;
}

.edge {
  position: absolute;
  top: 18px;
  right: 0;
  bottom: 54px;
  width: 1px;
  background: #bdbdbd;
}

.meter {
  position: absolute;
  top: 37px;
  right: 0;
  display: flex;
  align-items: flex-end;
  width: 8px;
  height: 64px;
  border: 2px solid #333338;
  border-right: 0;
  border-radius: 5px 0 0 5px;
  background: #5b5b66;
}

.meter span {
  width: 5px;
  height: 33px;
  margin-left: auto;
  border-radius: 2px 0 0 2px;
  background: #ff7322;
}

/* Taskbar */

.taskbar {
  display: flex;
  flex: none;
  height: 50px;
  background: linear-gradient(to right, #070707, #070707 60px, #161616 490px, #272727 640px, #292929);
}

.start {
  display: grid;
  place-items: center;
  width: 60px;
}

.start svg { width: 20px; height: 20px; }

.search {
  display: flex;
  align-items: center;
  gap: 15px;
  width: 430px;
  padding-left: 15px;
  border-top: 1px solid #ccc;
  background: #f1f1f1;
}

.search svg { width: 20px; height: 20px; }
.search input { flex: 1; font-size: 19px; }
.search input::placeholder { color: #2b2b2b; opacity: 1; }

.apps {
  display: flex;
  gap: 1px;
  margin-left: 4px;
}

.app {
  position: relative;
  display: grid;
  place-items: center;
  width: 61px;
}

.app svg { width: 30px; height: 30px; }

.app.running::after {
  content: "";
  position: absolute;
  right: 5px;
  bottom: 0;
  left: 5px;
  height: 3px;
  background: #76b9ed;
}

.app.current { background: #505050; }
.app.current::after { right: 0; left: 0; }

.tray {
  display: flex;
  align-items: center;
  gap: 10px;
  margin-left: auto;
  color: #fff;
}

.up { width: 16px; height: 9px; margin-right: 2px; }
.mini { width: 20px; height: 20px; }

.clock {
  width: 77px;
  font-size: 15px;
  line-height: 23px;
  text-align: center;
}

.peek {
  width: 6px;
  height: 50px;
  border-left: 1px solid #777;
}
```
